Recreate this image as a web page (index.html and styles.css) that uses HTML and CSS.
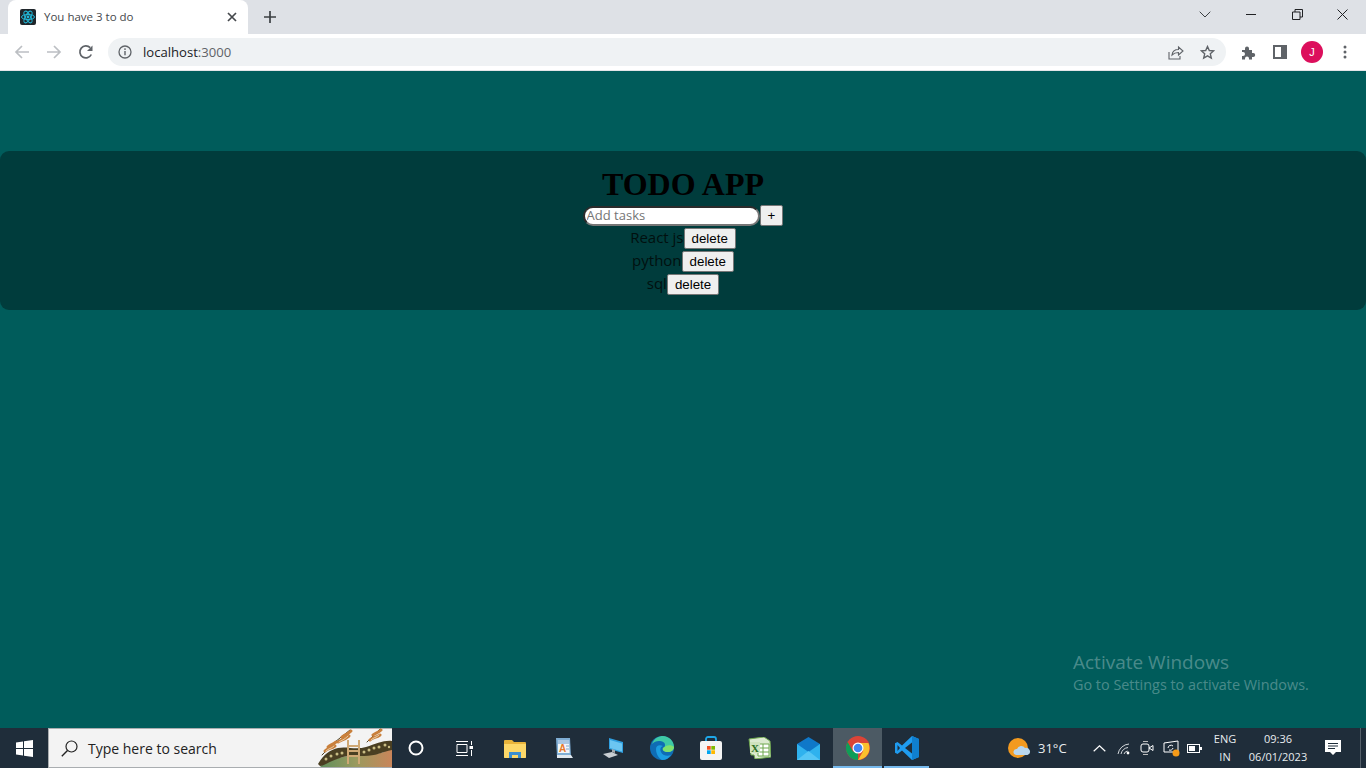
FILE: index.html
```html
<!DOCTYPE html>
<html lang="en">
<head>
<meta charset="utf-8">
<title>You have 3 to do</title>
<link rel="stylesheet" href="styles.css">
</head>
<body>
<div class="screen">
  <header class="tabstrip">
    <div class="tab">
      <svg class="favicon" width="16" height="16" viewBox="0 0 16 16"><rect width="16" height="16" rx="2" fill="#20262b"/><g fill="none" stroke="#22b8d8" stroke-width="1"><ellipse cx="8" cy="8" rx="6.5" ry="2.6"/><ellipse cx="8" cy="8" rx="6.5" ry="2.6" transform="rotate(60 8 8)"/><ellipse cx="8" cy="8" rx="6.5" ry="2.6" transform="rotate(120 8 8)"/></g><circle cx="8" cy="8" r="1.4" fill="#22b8d8"/></svg>
      <span class="tab-title">You have 3 to do</span>
      <svg class="tab-close" width="10" height="10" viewBox="0 0 10 10"><path d="M1 1l8 8M9 1l-8 8" stroke="#45484c" stroke-width="1.7"/></svg>
    </div>
    <svg class="new-tab" width="12" height="12" viewBox="0 0 12 12"><path d="M6 0v12M0 6h12" stroke="#3c4043" stroke-width="1.7"/></svg>
    <div class="win-controls">
      <svg class="win-chevron" width="12" height="7" viewBox="0 0 12 7"><path d="M.7.7L6 6l5.3-5.3" fill="none" stroke="#3c4043" stroke-width="1"/></svg>
      <svg class="win-min" width="10" height="1" viewBox="0 0 10 1"><path d="M0 .5h10" stroke="#202124"/></svg>
      <svg class="win-max" width="11" height="11" viewBox="0 0 11 11"><path d="M.5 3h7.5v7.500H.5zM3 3V.5h7.500V8H8" fill="none" stroke="#202124"/></svg>
      <svg class="win-close" width="11" height="11" viewBox="0 0 11 11"><path d="M.5.5l10 10M10.500.5l-10 10" stroke="#202124"/></svg>
    </div>
  </header>
  <nav class="toolbar">
    <svg class="nav-icon" width="16" height="16" viewBox="0 0 16 16"><path d="M15 8H2M8 2L2 8l6 6" fill="none" stroke="#bcbfc3" stroke-width="1.7"/></svg>
    <svg class="nav-icon" width="16" height="16" viewBox="0 0 16 16"><path d="M1 8h13M8 2l6 6-6 6" fill="none" stroke="#bcbfc3" stroke-width="1.7"/></svg>
    <svg class="nav-icon" width="16" height="16" viewBox="0 0 16 16"><path d="M13.300 10.500A6 6 0 1 1 12.200 3.700" fill="none" stroke="#5f6368" stroke-width="1.700"/><path d="M14.500 1.500v5.500H9z" fill="#5f6368"/></svg>
    <div class="omnibox">
      <svg class="info" width="14" height="14" viewBox="0 0 14 14"><circle cx="7" cy="7" r="6" fill="none" stroke="#5f6368" stroke-width="1.300"/><path d="M7 6v4.200" stroke="#5f6368" stroke-width="1.400"/><circle cx="7" cy="4.100" r=".9" fill="#5f6368"/></svg>
      <span class="url">localhost<span class="url-port">:3000</span></span>
      <svg class="omni-share" width="16" height="16" viewBox="0 0 16 16"><path d="M1 8v7h11v-3" fill="none" stroke="#5f6368" stroke-width="1.100"/><path d="M4 11c.5-4 3-5.500 6.500-5.500V3L15 7l-4.500 4V8.500C8 8.500 5.800 9.200 4 11z" fill="none" stroke="#5f6368" stroke-width="1.100"/></svg>
      <svg class="omni-star" width="15" height="15" viewBox="0 0 15 15"><path d="M7.500 1.500l1.800 4 4.200.4-3.200 2.900 1 4.300-3.800-2.300-3.800 2.300 1-4.300L1.500 5.900l4.200-.4z" fill="none" stroke="#5f6368" stroke-width="1.400"/></svg>
    </div>
    <svg class="ext" width="15" height="15" viewBox="0 0 15 15"><path d="M1 5h3V3.500a2 2 0 0 1 4 0V5h3v3h1.200a2 2 0 0 1 0 4H11v2.500H8v-1a2 2 0 0 0-4 0v1H1v-3.500h1a2 2 0 0 0 0-4H1z" fill="#5f6368"/></svg>
    <svg class="side" width="14" height="14" viewBox="0 0 14 14"><rect x="1" y="1" width="12" height="12" fill="none" stroke="#5f6368" stroke-width="2"/><rect x="8" y="1" width="5" height="12" fill="#5f6368"/></svg>
    <span class="avatar">J</span>
    <svg class="kebab" width="4" height="14" viewBox="0 0 4 14"><circle cx="2" cy="2" r="1.500" fill="#5f6368"/><circle cx="2" cy="7" r="1.500" fill="#5f6368"/><circle cx="2" cy="12" r="1.500" fill="#5f6368"/></svg>
  </nav>
  <main class="page">
    <section class="panel">
      <h1 class="title">TODO APP</h1>
      <form class="add-row">
        <input class="task-input" type="text" placeholder="Add tasks"><button class="btn" type="button">+</button>
      </form>
      <ul class="tasks">
        <li class="task">React js<button class="btn" type="button">delete</button></li>
        <li class="task">python<button class="btn" type="button">delete</button></li>
        <li class="task">sql<button class="btn" type="button">delete</button></li>
      </ul>
    </section>
    <aside class="watermark">
      <div class="wm-title">Activate Windows</div>
      <div class="wm-sub">Go to Settings to activate Windows.</div>
    </aside>
  </main>
  <footer class="taskbar">
    <div class="start">
      <svg width="17" height="17" viewBox="0 0 17 17"><path d="M0 2.400L7 1.400v6.600H0zM8 1.300L17 0v8H8zM0 9h7v6.600L0 14.600zM8 9h9v8L8 15.700z" fill="#fff"/></svg>
    </div>
    <div class="search">
      <svg class="search-icon" width="17" height="17" viewBox="0 0 17 17"><circle cx="10.500" cy="6.500" r="5.500" fill="none" stroke="#222" stroke-width="1.200"/><path d="M6.500 10.500L.8 16.200" stroke="#222" stroke-width="1.400"/></svg>
      <span class="search-text">Type here to search</span>
      <svg class="search-art" width="76" height="39" viewBox="0 0 76 39">
        <defs><linearGradient id="hill" x1="0" x2="1" y1="0" y2="0"><stop offset="0" stop-color="#5f8f5c"/><stop offset=".5" stop-color="#9a9a5e"/><stop offset="1" stop-color="#c9855a"/></linearGradient></defs>
        <path d="M4 39C10 32 24 28 48 27S68 22 76 20V39z" fill="url(#hill)"/>
        <path d="M2 36C8 26 14 22 22 20S40 22 50 19 68 12 76 13V22C66 24 60 28 48 28S34 27 24 30 8 38 4 38z" fill="#4a3f22"/>
        <g fill="#c9bd84"><circle cx="10" cy="31" r="1.500"/><circle cx="15" cy="28" r="1.500"/><circle cx="21" cy="26" r="1.500"/><circle cx="26" cy="25" r="1.500"/><circle cx="48" cy="24" r="1.500"/><circle cx="53" cy="22" r="1.500"/><circle cx="58" cy="20" r="1.500"/><circle cx="63" cy="19" r="1.500"/><circle cx="69" cy="17" r="1.500"/><circle cx="73" cy="19" r="1.200"/></g>
        <path d="M32 12V36M43 12V36M32 18H43M32 23H43M32 28H43" stroke="#cfa874" stroke-width="2" fill="none"/>
        <g fill="none" stroke-linecap="round"><path d="M6 27L19 14M19 14L34 2M51 14L64 1" stroke="#4a3f22"/>
        <g stroke="#c9803c" stroke-width="3"><path d="M9 23C12 20 15 21 19 18M12 19C14 17 16 17 20 14"/><path d="M22 14C25 12 28 12 33 8M26 9C28 7 31 7 35 3"/><path d="M54 12C57 9 60 10 64 7M57 7C59 5 62 5 65 2"/></g>
        <g stroke="#f1e2c4" stroke-width=".8"><path d="M10 23C13 20 15 21 18 18"/><path d="M23 14C26 12 28 12 32 8"/><path d="M55 12C58 9 60 10 63 7"/></g></g>
      </svg>
    </div>
    <div class="slot">
      <svg width="16" height="16" viewBox="0 0 16 16"><circle cx="8" cy="8" r="6.500" fill="none" stroke="#fff" stroke-width="2"/></svg>
    </div>
    <div class="slot slot-last">
      <svg width="17" height="15" viewBox="0 0 17 15"><path d="M1 3.500h10v8H1zM0 .5h12M0 14.500h12M15.500 0v4M15.500 9v6" fill="none" stroke="#fff"/><rect x="13.500" y="5" width="3.500" height="3" fill="#fff"/></svg>
    </div>
    <div class="app">
      <svg width="22" height="19" viewBox="0 0 22 19"><path d="M0 2a1 1 0 0 1 1-1h7l2 2h11a1 1 0 0 1 1 1v14a1 1 0 0 1-1 1H1a1 1 0 0 1-1-1z" fill="#e8b33b"/><path d="M0 5h22v13a1 1 0 0 1-1 1H1a1 1 0 0 1-1-1z" fill="#fcd768"/><path d="M5 19v-6h12v6h-3v-3H8v3z" fill="#3b8ed0"/></svg>
    </div>
    <div class="app">
      <svg width="18" height="22" viewBox="0 0 18 22"><path d="M1 1h14l1 19H2z" fill="#7faed5"/><path d="M3 3h11l.6 13H3z" fill="#f2f5f8"/><path d="M3 3h11v4H3z" fill="#a9c6e2"/><text x="4" y="15" class="art-a">A</text><path d="M11 9h3M11 12h3" stroke="#7fa8cc"/><path d="M2 18h14l2 3H2z" fill="#dfe8f0"/></svg>
    </div>
    <div class="app">
      <svg width="22" height="22" viewBox="0 0 22 22"><path d="M7 1l14 4v11L7 12z" fill="#2f9fe0"/><path d="M8 3l12 3.500v8L8 11z" fill="#6cc6f2"/><path d="M1 17l9-2 6 3-9 3z" fill="#c9ced3"/><path d="M10 12l3 1 0 3-3-1z" fill="#a3a9ae"/></svg>
    </div>
    <div class="app">
      <svg width="24" height="24" viewBox="0 0 24 24"><circle cx="12" cy="12" r="12" fill="#0f6cb4"/><path d="M2 8C4 2 9 0 13 0c6 0 11 5 11 11 0 3-3 5-6 5-4 0-6-2-5-4 1-1 2-1 2-3 0-3-3-4-6-4S4 6 2 8z" fill="#3fc9a5"/><path d="M24 11c0 3-3 5-6 5-4 0-6-2-5-4 3-3 8-4 11-1z" fill="#7ee06e"/><path d="M6 13c0-3 3-5 7-3-3 1-3 4-2 6 1 3 6 5 10 3-2 3-5 5-9 5 0 0-6-3-6-11z" fill="#1b9de2"/></svg>
    </div>
    <div class="app">
      <svg width="22" height="24" viewBox="0 0 22 24"><path d="M6 6V3a2 2 0 0 1 2-2h6a2 2 0 0 1 2 2v3" fill="none" stroke="#1ea7e8" stroke-width="1.800"/><rect y="5" width="22" height="19" rx="2" fill="#f4f4f4"/><rect x="7" y="10" width="3.700" height="3.700" fill="#f25022"/><rect x="11.300" y="10" width="3.700" height="3.700" fill="#7fba00"/><rect x="7" y="14.300" width="3.700" height="3.700" fill="#00a4ef"/><rect x="11.300" y="14.300" width="3.700" height="3.700" fill="#ffb900"/></svg>
    </div>
    <div class="app">
      <svg width="23" height="22" viewBox="0 0 23 22"><path d="M1 2l15-2 6 4 1 16-16 2-1-4H3z" fill="#dcead0" stroke="#6fa84f"/><path d="M10 7h11v12H10z" fill="#fff" stroke="#6fa84f"/><path d="M10 11h11M10 15h11M15 7v12" stroke="#6fa84f"/><path d="M2 5h10v11H2z" fill="#cfe3bd"/><text x="3" y="15" class="art-x">X</text></svg>
    </div>
    <div class="app">
      <svg width="23" height="23" viewBox="0 0 23 23"><path d="M0 7l11.500-7L23 7v16H0z" fill="#0f78c9"/><path d="M0 7l11.500 8L23 7v16H0z" fill="#2fb2ee"/><path d="M0 23l11.500-9L23 23z" fill="#55c6f5"/></svg>
    </div>
    <div class="app app-active">
      <svg width="24" height="24" viewBox="0 0 24 24"><circle cx="12" cy="12" r="12" fill="#db4437"/><path d="M12 24A12 12 0 0 1 1.600 6L7 15.500l5 1z" fill="#0f9d58"/><path d="M12 7h10.400A12 12 0 0 1 12 24l5.200-9z" fill="#fbc02d"/><circle cx="12" cy="12" r="5.500" fill="#fff"/><circle cx="12" cy="12" r="4.300" fill="#4285f4"/></svg>
      <i class="underline"></i>
    </div>
    <div class="app app-open">
      <svg width="24" height="24" viewBox="0 0 24 24"><path d="M17 0l7 3v18l-7 3L7 14.500 2.500 18 0 16.700v-9.400L2.500 6 7 9.500z" fill="#1f9cf0"/><path d="M17 6.500L10 12l7 5.500z" fill="#1f2d3a"/><path d="M17 0l7 3v18l-7 3z" fill="#0f7fd0"/><path d="M2.500 9L5 12l-2.500 3z" fill="#1f2d3a"/></svg>
      <i class="underline"></i>
    </div>
    <div class="tray">
      <svg class="weather" width="23" height="21" viewBox="0 0 23 21"><circle cx="10" cy="10" r="10" fill="#f39a1f"/><path d="M8 17a3 3 0 0 1 1-6 4.500 4.500 0 0 1 8-1 3.500 3.500 0 0 1 2.500 7z" fill="#b8d6ee"/></svg>
      <span class="temp">31°C</span>
      <svg class="t-chev" width="13" height="7" viewBox="0 0 13 7"><path d="M.7 6.300L6.500.8l5.800 5.500" fill="none" stroke="#fff" stroke-width="1.200"/></svg>
      <svg class="t-wifi" width="14" height="14" viewBox="0 0 14 14"><path d="M1 13A12 12 0 0 1 12 3M4 13a8.500 8.500 0 0 1 7-6.500M7 13a4.500 4.500 0 0 1 3.500-3" fill="none" stroke="#d5d9dd" stroke-width="1"/><circle cx="11" cy="12" r="1.400" fill="#fff"/></svg>
      <svg class="t-meet" width="14" height="16" viewBox="0 0 14 16"><rect x="1" y="4" width="8" height="8" rx="2" fill="none" stroke="#fff"/><path d="M9 8l4-2.500v5z" fill="none" stroke="#fff"/><path d="M3 1.500h5M3 14.500h5" stroke="#bbb"/></svg>
      <svg class="t-disp" width="17" height="17" viewBox="0 0 17 17"><path d="M1 3l14-2v11H1z" fill="none" stroke="#fff"/><path d="M5 8a3 3 0 0 1 5-2M10 8a3 3 0 0 1-4 2" fill="none" stroke="#fff"/><circle cx="13" cy="13" r="3.500" fill="#f59a18"/></svg>
      <svg class="t-batt" width="15" height="9" viewBox="0 0 15 9"><rect x=".5" y=".5" width="12" height="8" fill="none" stroke="#fff"/><rect x="2" y="2" width="6" height="5" fill="#fff"/><rect x="13" y="3" width="2" height="3" fill="#fff"/></svg>
      <div class="lang"><span>ENG</span><span>IN</span></div>
      <div class="clock"><span>09:36</span><span>06/01/2023</span></div>
      <svg class="t-note" width="16" height="16" viewBox="0 0 16 16"><path d="M0 0h16v12h-5l-3 3-3-3H0z" fill="#fff"/><path d="M3 3.500h10M3 6h10M3 8.500h7" stroke="#1f2d3a"/></svg>
      <i class="show-desktop"></i>
    </div>
  </footer>
</div>
</body>
</html>
```
FILE: styles.css
```css
* { box-sizing: border-box; }
html, body { margin: 0; height: 100%; overflow: hidden; }
.screen { width: 1366px; height: 768px; display: flex; flex-direction: column; font-family: "Open Sans", "Liberation Sans", sans-serif; }

/* browser chrome */
.tabstrip { height: 34px; background: #dee1e6; display: flex; align-items: center; padding-left: 8px; flex: none; }
.tab { width: 240px; height: 34px; background: #fff; border-radius: 8px 8px 0 0; display: flex; align-items: center; padding: 0 10px 0 12px; }
.favicon { flex: none; }
.tab-title { margin-left: 8px; margin-bottom: 2px; font-size: 11.500px; color: #45484c; flex: 1; white-space: nowrap; }
.tab-close { flex: none; margin-right: 1px; }
.new-tab { margin-left: 16px; }
.win-controls { margin-left: auto; display: flex; align-items: center; height: 100%; padding-bottom: 6px; }
.win-chevron { margin-right: 35px; }
.win-min { margin-right: 36px; }
.win-max { margin-right: 34px; }
.win-close { margin-right: 18px; }

.toolbar { height: 37px; background: #fff; border-bottom: 1px solid #e3e5e8; display: flex; align-items: center; padding-left: 14px; flex: none; }
.nav-icon { margin-right: 16px; flex: none; }
.nav-icon + .nav-icon + .nav-icon { margin-right: 14px; }
.omnibox { width: 1118px; height: 28px; border-radius: 14px; background: #eff2f4; display: flex; align-items: center; padding-left: 10px; flex: none; }
.info { flex: none; }
.url { margin-left: 11px; font-size: 13.100px; color: #202124; flex: 1; }
.url-port { color: #5f6368; }
.omni-share { margin-right: 16px; }
.omni-star { margin-right: 11px; }
.ext { margin-left: 15px; flex: none; }
.side { margin-left: 17px; flex: none; }
.avatar { margin-left: 14px; width: 22px; height: 22px; border-radius: 50%; background: #dc0f5c; color: #fff; font-size: 11px; display: flex; align-items: center; justify-content: center; flex: none; font-family: "Liberation Sans", sans-serif; }
.kebab { margin-left: 20px; flex: none; }

/* page */
.page { flex: 1; background: #005c5b; padding-top: 80px; position: relative; }
.panel { height: 159px; background: #003c3c; border-radius: 9px; padding-top: 15px; text-align: center; color: #000; font-family: "Open Sans", "Liberation Sans", sans-serif; }
.title { margin: 0 0 1px; font: bold 32px/37px "Liberation Serif", serif; }
.add-row { display: flex; justify-content: center; align-items: flex-end; height: 23px; padding-bottom: 1px; margin: 0; }
.task-input { width: 177px; height: 20px; border: 2px solid; border-color: #2b2b2b #767676 #767676 #2b2b2b; border-radius: 10px; background: #fff; padding: 0 1px 2px 2px; font: 13px "Open Sans", sans-serif; outline: none; }
.task-input::placeholder { color: #757575; }
.btn { height: 21px; padding: 0 7px; border: 1px solid #767676; border-radius: 2px; background: #efefef; color: #000; font: 13.333px "Liberation Sans", sans-serif; }
.tasks { list-style: none; margin: 0; padding: 0; }
.task { height: 23px; display: flex; justify-content: center; align-items: flex-start; font-size: 15px; line-height: 21px; color: #00100f; }
.task .btn { margin-top: 1px; }

/* watermark */
.watermark { position: absolute; left: 1073px; top: 578px; color: rgba(255,255,255,.3); }
.wm-title { font-size: 19px; line-height: 26px; }
.wm-sub { font-size: 14.400px; line-height: 20px; }

/* taskbar */
.taskbar { height: 40px; background: #1f2d3a; display: flex; align-items: stretch; flex: none; color: #fff; }
.start { width: 48px; display: flex; align-items: center; justify-content: center; flex: none; }
.search { width: 344px; background: #f3f3f3; border: 1px solid #a9adb0; border-width: 1px 0 1px 1px; display: flex; align-items: center; padding-left: 12px; position: relative; flex: none; }
.search-icon { flex: none; }
.search-text { margin-left: 10px; font-size: 14px; color: #222; }
.search-art { position: absolute; right: 0; bottom: 0; }
.slot { width: 48px; display: flex; align-items: center; justify-content: center; flex: none; }
.slot-last { margin-right: 2px; }
.app { width: 49px; display: flex; align-items: center; justify-content: center; position: relative; flex: none; }
.app-active { background: #4c5a64; }
.underline { position: absolute; left: 0; right: 0; bottom: 0; height: 2px; background: #76b9ed; }
.app-open .underline { left: 2px; right: 2px; }
.art-a { font: bold 10px "Liberation Sans", sans-serif; fill: #e8792b; }
.art-x { font: bold 11px "Liberation Serif", serif; fill: #2a6d1f; }
.tray { flex: 1; display: flex; align-items: center; position: relative; padding-left: 77px; font-size: 12px; color: #e8ecef; }
.weather { flex: none; }
.temp { margin-left: 7px; font-size: 13px; width: 32px; white-space: nowrap; }
.t-chev { margin-left: 23px; }
.t-wifi { margin-left: 11px; }
.t-meet { margin-left: 9px; }
.t-disp { margin-left: 9px; }
.t-batt { margin-left: 7px; }
.lang { margin-left: 8px; width: 30px; display: flex; flex-direction: column; align-items: center; line-height: 18px; font-size: 11px; }
.clock { margin-left: 8px; width: 60px; display: flex; flex-direction: column; align-items: center; line-height: 18px; font-size: 11px; white-space: nowrap; }
.t-note { margin-left: 17px; }
.show-desktop { position: absolute; right: 5px; top: 0; bottom: 0; width: 1px; background: #55606a; }
```
